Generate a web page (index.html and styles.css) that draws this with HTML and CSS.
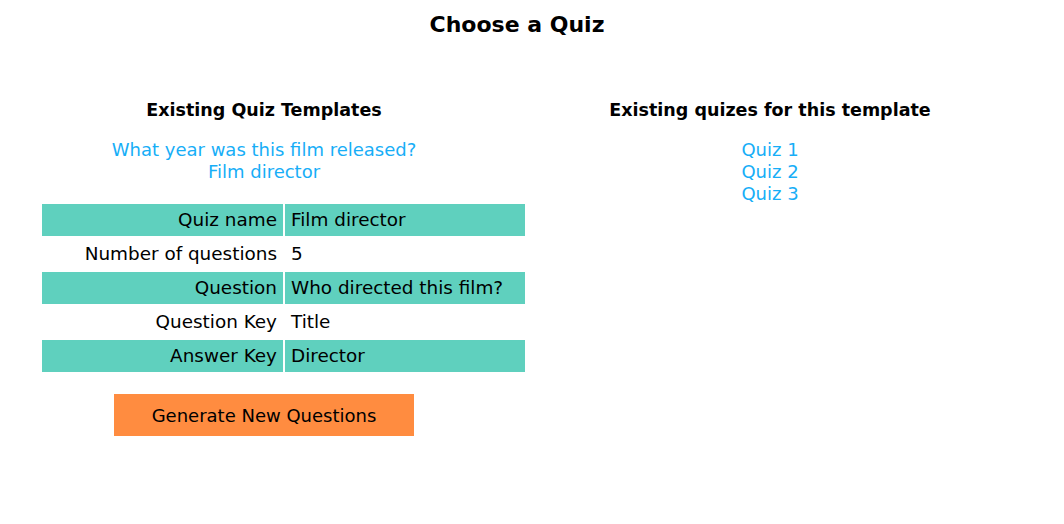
FILE: index.html
```html
<!DOCTYPE html>
<html>
<head>
<meta charset="utf-8">
<link rel="stylesheet" href="styles.css">
</head>
<body>
<div class="page">
  <h1 class="title">Choose a Quiz</h1>
  <div class="columns">
    <section class="col">
      <h2 class="heading">Existing Quiz Templates</h2>
      <div class="links">
        <a class="link">What year was this film released?</a>
        <a class="link">Film director</a>
      </div>
      <table class="details">
        <tr class="shaded"><td class="label">Quiz name</td><td class="value">Film director</td></tr>
        <tr><td class="label">Number of questions</td><td class="value">5</td></tr>
        <tr class="shaded"><td class="label">Question</td><td class="value">Who directed this film?</td></tr>
        <tr><td class="label">Question Key</td><td class="value">Title</td></tr>
        <tr class="shaded"><td class="label">Answer Key</td><td class="value">Director</td></tr>
      </table>
      <button class="generate">Generate New Questions</button>
    </section>
    <section class="col">
      <h2 class="heading">Existing quizes for this template</h2>
      <div class="links">
        <a class="link">Quiz 1</a>
        <a class="link">Quiz 2</a>
        <a class="link">Quiz 3</a>
      </div>
    </section>
  </div>
</div>
</body>
</html>
```

FILE: styles.css
```css
html, body {
  margin: 0;
  padding: 0;
  background: #ffffff;
}
body {
  font-family: "DejaVu Sans", Verdana, sans-serif;
  color: #000;
}
.page {
  width: 1012px;
  margin-left: 11px;
}
.title {
  margin: 0;
  padding-top: 11px;
  font-size: 22px;
  line-height: 28px;
  font-weight: bold;
  text-align: center;
}
.columns {
  display: flex;
  margin-top: 59px;
}
.col {
  width: 506px;
  display: flex;
  flex-direction: column;
  align-items: center;
}
.heading {
  margin: 0;
  font-size: 17.5px;
  line-height: 24px;
  font-weight: bold;
}
.links {
  margin-top: 17px;
  display: flex;
  flex-direction: column;
  align-items: center;
}
.link {
  color: #17aef7;
  font-size: 18px;
  line-height: 22px;
  cursor: pointer;
}
.details {
  align-self: flex-start;
  margin-top: 19px;
  margin-left: 29px;
  width: 487px;
  border-collapse: separate;
  border-spacing: 2px;
  font-size: 18.4px;
}
.details td {
  height: 32px;
  padding: 0 6px;
  line-height: 32px;
}
.details .label {
  width: 229px;
  text-align: right;
}
.shaded td {
  background: #5fd0be;
}
.generate {
  margin-top: 20px;
  width: 300px;
  height: 42px;
  border: none;
  background: #ff8c40;
  font-family: inherit;
  font-size: 18px;
  color: #000;
  padding: 0;
}
```
